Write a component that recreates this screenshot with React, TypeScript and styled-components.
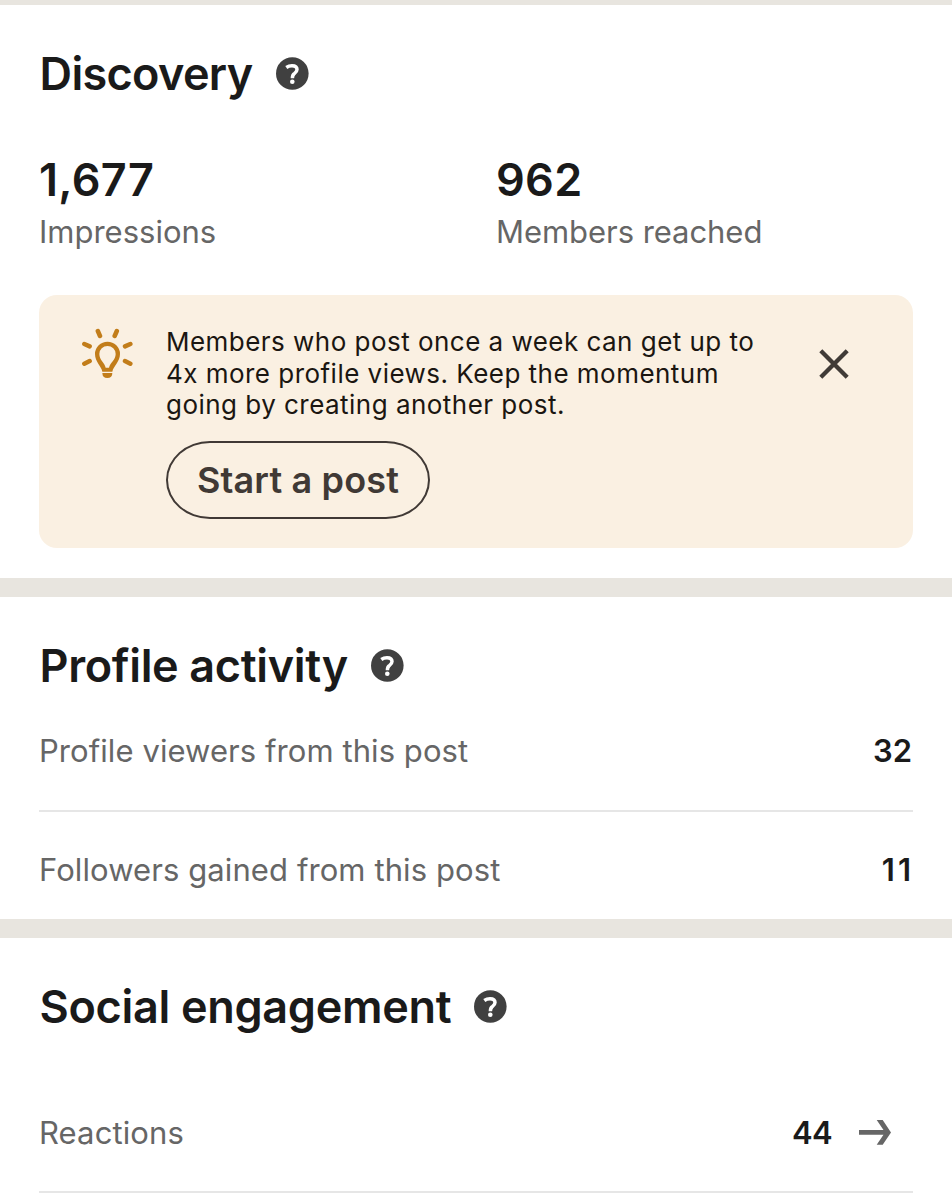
import React from "react";
import styled, { createGlobalStyle } from "styled-components";

const GlobalStyle = createGlobalStyle`
  *, *::before, *::after { box-sizing: border-box; }
  body {
    margin: 0;
    background: #fff;
    color: #1a1a1a;
    font-family: Inter, "Liberation Sans", sans-serif;
    overflow-x: hidden;
  }
  svg { display: block; flex: none; }
`;

const Page = styled.main`
  height: 1200px;
  overflow: hidden;
  display: flex;
  flex-direction: column;
  background: #e8e5df;
  padding-top: 5px;
`;

const Section = styled.section<{ $height?: number }>`
  flex: ${(p) => (p.$height ? `0 0 ${p.$height}px` : "1 0 auto")};
  background: #fff;
  padding: 41px 39px 0;

  & + & {
    margin-top: 19px;
  }
`;

const Heading = styled.header`
  display: flex;
  align-items: center;
  gap: 23px;
  height: 55px;
  padding-left: 0.6px;
`;

const Title = styled.h2<{ $tracking: number }>`
  margin: 0;
  font-size: 45px;
  font-weight: 600;
  line-height: 55px;
  letter-spacing: ${(p) => p.$tracking}px;
  white-space: nowrap;
`;

const Stats = styled.div`
  display: grid;
  grid-template-columns: 457px 1fr;
  margin-top: 52px;
`;

const StatValue = styled.div`
  font-size: 45px;
  font-weight: 600;
  line-height: 54px;
  letter-spacing: 0.3px;
`;

const Label = styled.span<{ $tracking?: number }>`
  display: block;
  color: #666;
  font-size: 31px;
  line-height: 38px;
  letter-spacing: ${(p) => p.$tracking ?? 0}px;
  white-space: nowrap;
`;

const StatLabel = styled(Label)`
  margin-top: 6px;
`;

const Tip = styled.aside`
  display: flex;
  align-items: flex-start;
  height: 253px;
  margin-top: 44px;
  padding: 31px 63px 0 43px;
  border-radius: 18px;
  background: #faf0e2;
`;

const TipIcon = styled.div`
  margin: 2px 33px 0 0;
`;

const TipBody = styled.div`
  flex: 1;
`;

const TipText = styled.p`
  margin: 0;
  color: #1b1611;
  font-size: 26px;
  line-height: 31.67px;
  letter-spacing: 0.47px;
  white-space: nowrap;
`;

const PostButton = styled.button`
  display: flex;
  align-items: center;
  justify-content: center;
  width: 264px;
  height: 78px;
  margin-top: 20px;
  padding: 0;
  border: 2px solid #403935;
  border-radius: 44px / 39px;
  background: transparent;
  color: #403935;
  font-family: inherit;
  font-size: 36px;
  font-weight: 600;
  letter-spacing: 0.15px;
`;

const CloseButton = styled.button`
  margin: 23px 1px 0 0;
  padding: 0;
  border: 0;
  background: none;
`;

const Row = styled.div<{ $top: number; $height: number; $divider?: boolean; $inset?: number }>`
  display: flex;
  justify-content: space-between;
  align-items: flex-start;
  height: ${(p) => p.$height}px;
  padding-top: ${(p) => p.$top}px;
  padding-right: ${(p) => p.$inset ?? 0}px;
  border-bottom: ${(p) => (p.$divider ? "2px solid #e6e6e6" : "0")};
`;

const RowValue = styled.span<{ $tracking?: number; $shift?: number }>`
  margin-right: ${(p) => -(p.$shift ?? 0)}px;
  font-size: 31px;
  font-weight: 600;
  line-height: 38px;
  letter-spacing: ${(p) => p.$tracking ?? 0}px;
`;

const RowEnd = styled.div`
  display: flex;
  align-items: center;
  gap: 27px;
  height: 38px;
`;

const HelpIcon = () => (
  <svg width="33" height="33" viewBox="0 0 33 33" fill="none" aria-label="Help">
    <circle cx="16.3" cy="16.5" r="16.3" fill="#404040" />
    <path
      d="M10.3 10.5C12 9.3 14 8.7 16 8.7c3.2 0 5 1.4 5 3.9 0 2.2-1.4 3.1-2.8 4.1-1.2.8-1.8 1.6-1.8 4.6"
      stroke="#fff"
      strokeWidth="3.5"
    />
    <circle cx="16.3" cy="24.7" r="2.3" fill="#fff" />
  </svg>
);

const BulbIcon = () => (
  <svg width="51" height="51" viewBox="66 54 153 153" fill="#c27d1a">
    <path
      fillRule="evenodd"
      d="M127 185C124 168 105 156 105 132a37.5 37 0 0 1 75 0c0 24-20 36-23 53ZM137 173h10c3-15 20-23 20-41a24.5 24 0 0 0-49 0c0 18 16 26 19 41Z"
    />
    <path d="M127 189h30c0 10-5 15-15 15s-15-5-15-15Z" />
    <path
      d="M113.5 63l6.5 15M170.5 63l-6.5 15M73 102l16 7M73 161l16-8M211 102l-16 7M211 161l-16-8"
      stroke="#c27d1a"
      strokeWidth="13.5"
      strokeLinecap="round"
    />
  </svg>
);

const CloseIcon = () => (
  <svg width="30" height="30" viewBox="0 0 30 30" fill="none" stroke="#403b37" strokeWidth="4.3">
    <path d="M1.8 1.8l26.4 26.4M28.2 1.8L1.8 28.2" />
  </svg>
);

const ArrowIcon = () => (
  <svg width="32" height="25" viewBox="0 0 32 25" fill="#666">
    <path d="M17.7 0h6L32 12.4l-8.3 12.3h-6l6.8-10H0V10h24.5Z" />
  </svg>
);

const SectionHeading = ({ title, tracking }: { title: string; tracking: number }) => (
  <Heading>
    <Title $tracking={tracking}>{title}</Title>
    <HelpIcon />
  </Heading>
);

export default function App() {
  return (
    <>
      <GlobalStyle />
      <Page>
        <Section $height={572.5}>
          <SectionHeading title="Discovery" tracking={-0.67} />
          <Stats>
            <div>
              <StatValue>1,677</StatValue>
              <StatLabel>Impressions</StatLabel>
            </div>
            <div>
              <StatValue>962</StatValue>
              <StatLabel $tracking={-0.05}>Members reached</StatLabel>
            </div>
          </Stats>
          <Tip>
            <TipIcon>
              <BulbIcon />
            </TipIcon>
            <TipBody>
              <TipText>
                Members who post once a week can get up to
                <br />
                4x more profile views. Keep the momentum
                <br />
                going by creating another post.
              </TipText>
              <PostButton type="button">Start a post</PostButton>
            </TipBody>
            <CloseButton type="button" aria-label="Dismiss">
              <CloseIcon />
            </CloseButton>
          </Tip>
        </Section>

        <Section $height={322}>
          <SectionHeading title="Profile activity" tracking={-0.35} />
          <Row $top={39} $height={119} $divider>
            <Label $tracking={0.07}>Profile viewers from this post</Label>
            <RowValue $shift={-1}>32</RowValue>
          </Row>
          <Row $top={39} $height={77}>
            <Label $tracking={0.09}>Followers gained from this post</Label>
            <RowValue $tracking={3} $shift={1}>11</RowValue>
          </Row>
        </Section>

        <Section>
          <SectionHeading title="Social engagement" tracking={-0.32} />
          <Row $top={80} $height={159} $divider $inset={22}>
            <Label $tracking={0.12}>Reactions</Label>
            <RowEnd>
              <RowValue $tracking={-0.6}>44</RowValue>
              <ArrowIcon />
            </RowEnd>
          </Row>
        </Section>
      </Page>
    </>
  );
}
